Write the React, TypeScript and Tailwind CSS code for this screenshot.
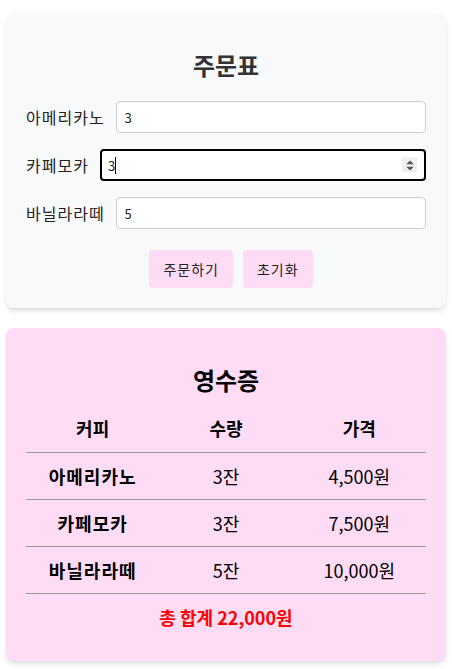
import React from "react";

const FONT = { fontFamily: '"Noto Sans CJK KR", "Noto Sans", sans-serif' };

const ROWS = [
  { name: "아메리카노", qty: 3, price: "4,500원" },
  { name: "카페모카", qty: 3, price: "7,500원" },
  { name: "바닐라라떼", qty: 5, price: "10,000원" },
];

function Spinner() {
  return (
    <span className="pointer-events-none absolute right-[9px] top-1/2 flex h-[15px] w-[15px] -translate-y-1/2 flex-col items-center justify-center gap-[2px] bg-[#efefef]">
      <svg width="8" height="4" viewBox="0 0 8 4">
        <path d="M0 4 L4 0 L8 4 Z" fill="#555" />
      </svg>
      <svg width="8" height="4" viewBox="0 0 8 4">
        <path d="M0 0 L4 4 L8 0 Z" fill="#555" />
      </svg>
    </span>
  );
}

export default function App() {
  return (
    <div className="flex flex-col gap-5 px-[6px] pt-[13px] pb-2 text-[#222]" style={FONT}>
      <section className="rounded-lg bg-[#f8f9fb] p-5 shadow-md">
        <h2 className="mt-[14px] mb-[19px] text-center text-2xl leading-[35px] font-bold text-[#333]">주문표</h2>

        <div className="flex flex-col gap-4">
          <div className="flex items-center gap-[11px]">
            <label className="text-base tracking-[1px]">아메리카노</label>
            <input
              type="number"
              readOnly
              value={3}
              className="h-8 flex-1 rounded border border-[#ccc] bg-white pl-2 text-[13px] outline-none [appearance:textfield] [&::-webkit-inner-spin-button]:appearance-none"
            />
          </div>
          <div className="flex items-center gap-[11px]">
            <label className="text-base tracking-[1px]">카페모카</label>
            <div className="relative flex-1">
              <input
                type="text"
                readOnly
                value="3"
                className="h-8 w-full rounded border-2 border-black bg-white pl-[6px] text-[13px] outline-none"
              />
              <span className="absolute top-[8px] left-[15px] h-[17px] w-px bg-black" />
              <Spinner />
            </div>
          </div>
          <div className="flex items-center gap-[11px]">
            <label className="text-base tracking-[1px]">바닐라라떼</label>
            <input
              type="number"
              readOnly
              value={5}
              className="h-8 flex-1 rounded border border-[#ccc] bg-white pl-2 text-[13px] outline-none [appearance:textfield] [&::-webkit-inner-spin-button]:appearance-none"
            />
          </div>
        </div>

        <div className="mt-[21px] flex justify-center">
          <button className="ml-2.5 h-[38px] rounded bg-[#ffdcf5] px-3.5 text-sm tracking-[1px] text-[#222]">주문하기</button>
          <button className="ml-2.5 h-[38px] rounded bg-[#ffdcf5] px-3.5 text-sm tracking-[1px] text-[#222]">초기화</button>
        </div>
      </section>

      <section className="rounded-lg bg-[#ffdcf5] p-5 shadow-md">
        <h2 className="mt-[14px] mb-2 text-center text-2xl leading-[35px] font-bold text-black">영수증</h2>

        <table className="w-full table-fixed border-collapse text-center text-lg text-black">
          <thead>
            <tr className="h-[47px] border-b border-[#999]">
              <th className="font-bold">커피</th>
              <th className="font-bold">수량</th>
              <th className="font-bold">가격</th>
            </tr>
          </thead>
          <tbody>
            {ROWS.map((r) => (
              <tr key={r.name} className="h-[47px] border-b border-[#999]">
                <td className="font-bold tracking-[1px]">{r.name}</td>
                <td>{r.qty}잔</td>
                <td>{r.price}</td>
              </tr>
            ))}
          </tbody>
        </table>

        <p className="flex h-[47px] items-center justify-center text-lg font-bold text-[#ff0000]">총 합계 22,000원</p>
      </section>
    </div>
  );
}
